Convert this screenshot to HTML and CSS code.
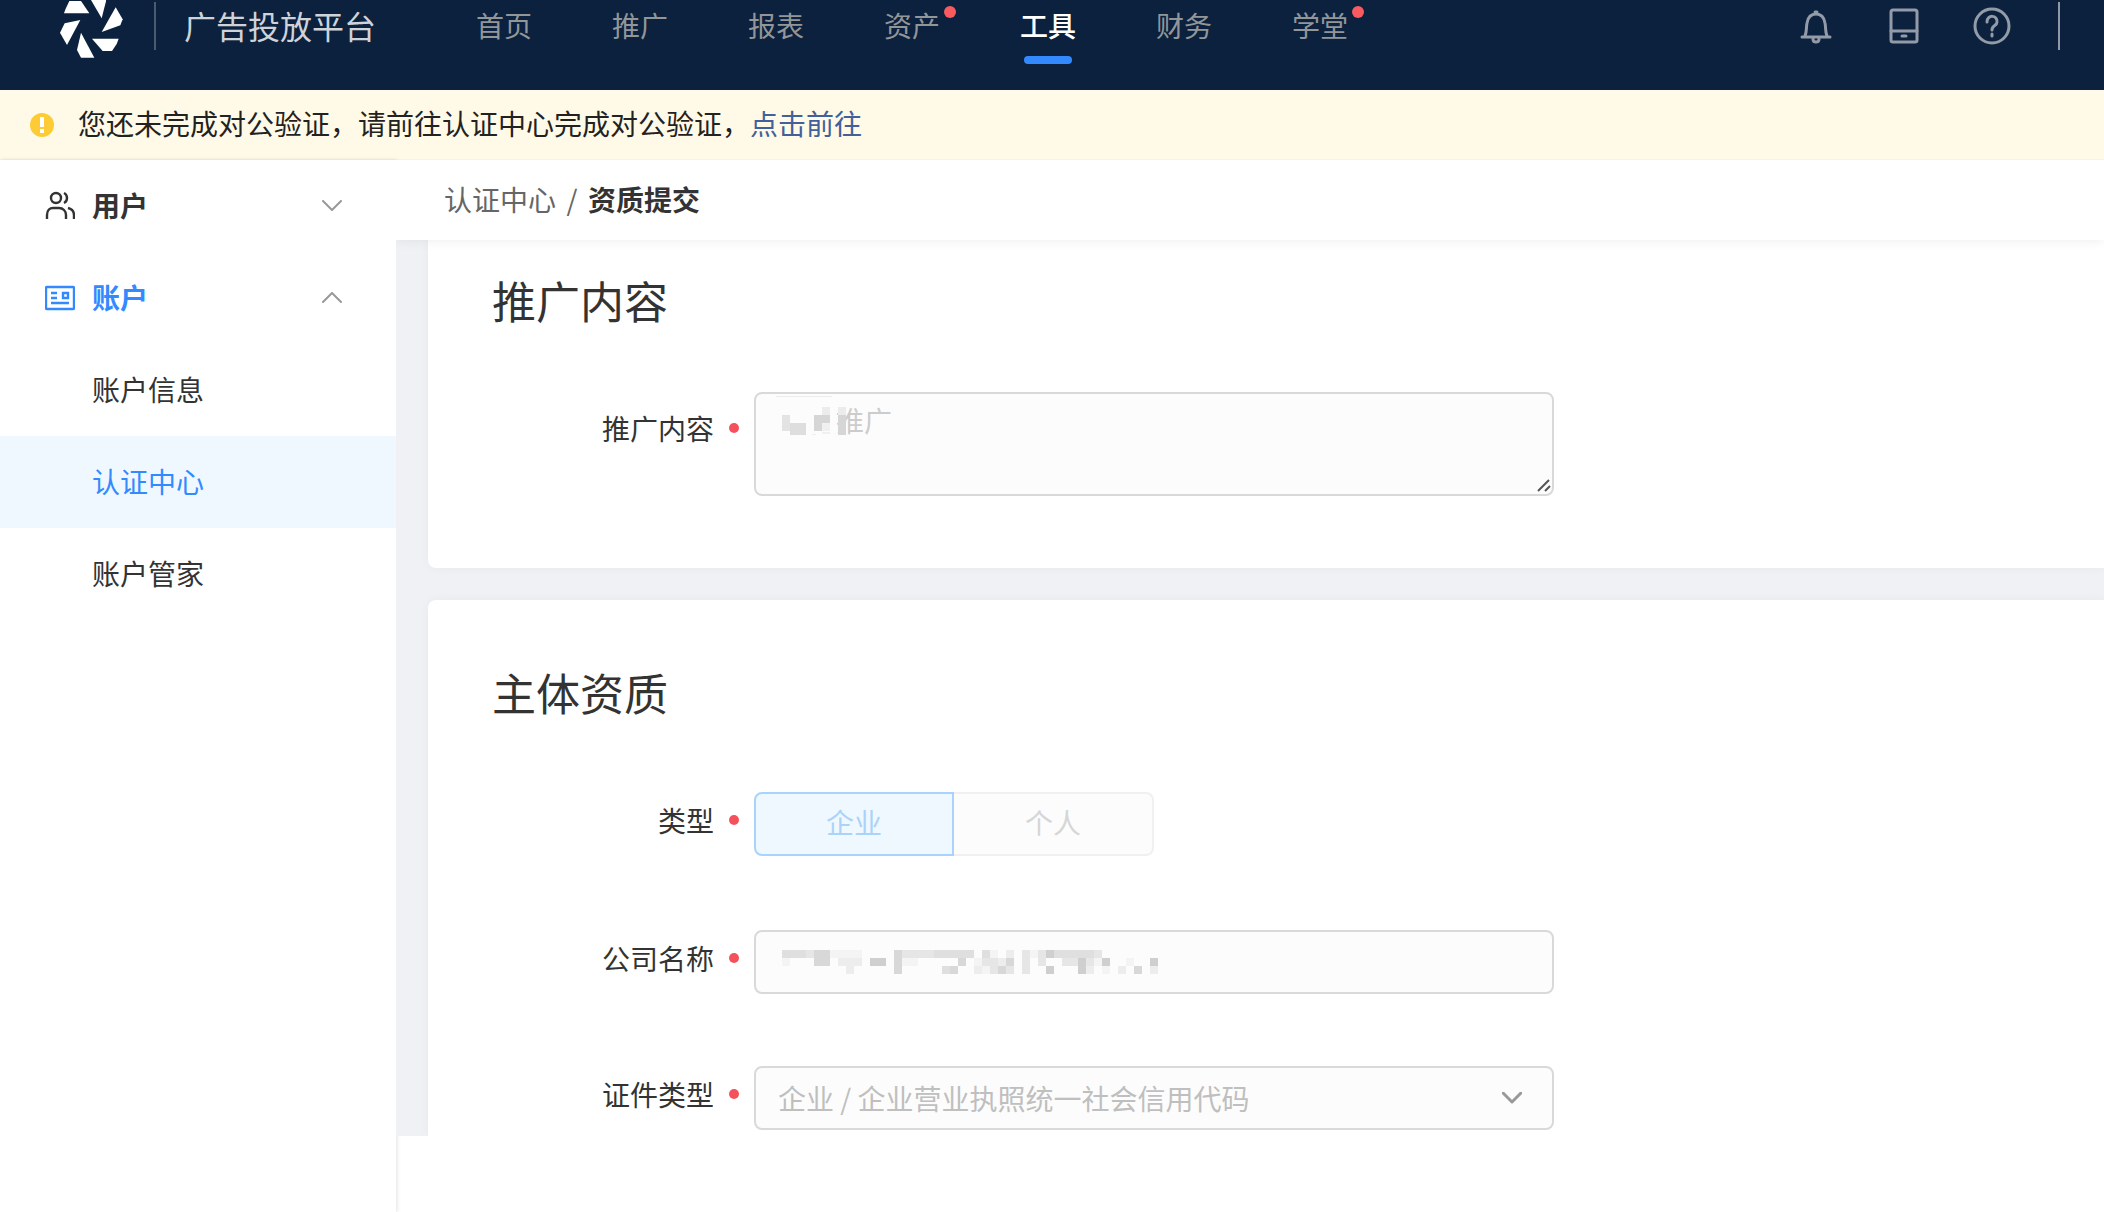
FILE: index.html
```html
<!DOCTYPE html>
<html lang="zh-CN">
<head>
  <meta charset="UTF-8">
  <meta name="viewport" content="width=device-width, initial-scale=1.0">
  <title>广告投放平台</title>
  <link rel="stylesheet" href="styles.css">
</head>
<body>
  <header class="header">
    <div class="header-row">
      <svg class="logo" viewBox="177 -18 201 192" fill="#fff">
        <path d="M192 40L197 26L208 3H243L268 40Z"/>
        <path d="M266 -12H318V4L305 55Z"/>
        <path d="M347 22L368 58L361 76L305 96Z"/>
        <path d="M276 116H356L350 132L336 153H308Z"/>
        <path d="M243 98L283 173H243L231 150Z"/>
        <path d="M241 60L201 135L180 98L194 70Z"/>
      </svg>
      <span class="divider"></span>
      <span class="brand">广告投放平台</span>
      <nav class="nav">
        <a href="#">首页</a>
        <a href="#">推广</a>
        <a href="#">报表</a>
        <a href="#" class="has-dot">资产</a>
        <a href="#" class="active">工具</a>
        <a href="#">财务</a>
        <a href="#" class="has-dot">学堂</a>
      </nav>
      <div class="tools">
        <button type="button" aria-label="通知">
          <svg viewBox="0 0 40 40">
            <path d="M6 31H34M9 30C11 26 10 21 11 17C12 11 15 8 20 8C25 8 28 11 29 17C30 21 29 26 31 30M17 33C17 37 23 37 23 33M19 6H21"/>
          </svg>
        </button>
        <button type="button" aria-label="设备">
          <svg viewBox="0 0 40 40">
            <rect x="7" y="4" width="26" height="32" rx="2"/>
            <path d="M7 25H33M18 30H22"/>
          </svg>
        </button>
        <button type="button" aria-label="帮助">
          <svg viewBox="0 0 40 40">
            <circle cx="20" cy="20" r="17"/>
            <path d="M15 16C15 8 26 9 25 16C25 20 20 19 20 24M20 28V30"/>
          </svg>
        </button>
      </div>
      <span class="divider light"></span>
    </div>
  </header>

  <div class="alert">
    <svg class="alert-icon" viewBox="0 0 24 24">
      <circle cx="12" cy="12" r="12" fill="#fdcb35"/>
      <path d="M12 4V14M12 16V20" stroke="#fff" stroke-width="4"/>
    </svg>
    <p>您还未完成对公验证，请前往认证中心完成对公验证，<a href="#">点击前往</a></p>
  </div>

  <div class="layout">
    <aside class="sidebar">
      <button type="button" class="menu-title">
        <svg class="menu-icon" viewBox="0 0 30 30">
          <circle cx="11" cy="7" r="5"/>
          <path d="M2 28V24C2 19 5 17 8 17H14C18 17 21 20 21 24V28M19 2C23 4 23 10 19 12M23 17C27 18 29 21 29 24V28"/>
        </svg>
        <span>用户</span>
        <svg class="arrow" viewBox="0 0 20 12"><path d="M1 1L10 10L19 1"/></svg>
      </button>
      <button type="button" class="menu-title active">
        <svg class="menu-icon" viewBox="0 0 30 30">
          <rect x="1" y="4" width="28" height="22" rx="1"/>
          <path d="M6 10H12M6 15H12M6 20H24M18 10H23V15H18Z"/>
        </svg>
        <span>账户</span>
        <svg class="arrow" viewBox="0 0 20 12"><path d="M1 10L10 1L19 10"/></svg>
      </button>
      <a href="#" class="menu-item">账户信息</a>
      <a href="#" class="menu-item active">认证中心</a>
      <a href="#" class="menu-item">账户管家</a>
    </aside>

    <main class="main">
      <div class="breadcrumb">
        <a href="#">认证中心</a>
        <span class="slash">/</span>
        <strong>资质提交</strong>
      </div>

      <div class="content">
        <section class="card card-top">
          <h2>推广内容</h2>
          <div class="form-row">
            <label for="promo">推广内容</label>
            <div class="field field-area">
              <textarea id="promo" disabled>推广</textarea>
              <svg class="mosaic mosaic-area" viewBox="0 0 72 40" shape-rendering="crispEdges">
                <path fill="#ececec" d="M0 0h56v1h-56zM46 11h8v8h-8zM62 11h8v8h-8z"/>
                <path fill="#e3e3e3" d="M6 19h8v16h-8zM14 35h8v4h-8z"/>
                <path fill="#dedede" d="M14 27h16v12h-16z"/>
                <path fill="#d6d6d6" d="M38 19h16v8h-16zM38 27h8v8h-8zM62 19h8v20h-8z"/>
                <path fill="#f0f0f0" d="M46 27h8v8h-8zM46 36h8v2h-8zM36 38h4v1h-4z"/>
              </svg>
              <svg class="grip" viewBox="0 0 14 14"><path d="M1 13L12 2M8 13L13 8"/></svg>
            </div>
          </div>
        </section>

        <section class="card">
          <h2>主体资质</h2>
          <div class="form-row">
            <span class="label" id="type-label">类型</span>
            <div class="radio-group" role="radiogroup" aria-labelledby="type-label">
              <label><input type="radio" name="type" checked disabled><span>企业</span></label>
              <label><input type="radio" name="type" disabled><span>个人</span></label>
            </div>
          </div>
          <div class="form-row">
            <label for="company">公司名称</label>
            <div class="field">
              <input type="text" id="company" disabled>
              <!-- masked company name, 8px cells -->
              <svg class="mosaic" viewBox="0 0 376 24" shape-rendering="crispEdges">
                <path fill="#cfcfcf" d="M88 8h16v8h-16zM264 0h8v8h-8zM264 16h8v8h-8zM320 8h8v8h-8zM368 8h8v8h-8zM296 8h8v16h-8z"/>
                <path fill="#d8d8d8" d="M32 0h16v16h-16zM112 0h8v24h-8zM176 8h8v8h-8zM216 16h8v8h-8zM224 8h8v8h-8zM168 16h8v8h-8zM352 16h8v8h-8z"/>
                <path fill="#dfdfdf" d="M0 0h24v8h-24zM152 0h40v8h-40zM200 0h8v8h-8zM272 0h40v8h-40zM160 16h8v8h-8z"/>
                <path fill="#e6e6e6" d="M24 0h8v8h-8zM120 0h32v8h-32zM200 8h16v8h-16zM208 16h8v8h-8zM224 16h8v8h-8zM240 0h8v24h-8zM280 8h16v8h-16zM304 8h8v8h-8zM312 0h8v8h-8zM256 0h8v16h-8z"/>
                <path fill="#ededed" d="M56 8h24v8h-24zM64 16h8v8h-8zM192 16h8v8h-8zM216 8h8v8h-8zM224 0h8v8h-8zM304 16h8v8h-8zM336 16h8v8h-8zM368 16h8v8h-8z"/>
                <path fill="#f4f4f4" d="M0 8h8v8h-8zM48 0h32v8h-32zM120 8h16v8h-16zM192 8h8v8h-8zM200 16h8v8h-8zM208 0h8v8h-8zM248 0h8v8h-8zM312 8h8v8h-8zM320 16h8v8h-8zM344 8h8v8h-8z"/>
              </svg>
            </div>
          </div>
          <div class="form-row">
            <label for="cert">证件类型</label>
            <div class="field">
              <select id="cert" disabled>
                <option>企业 / 企业营业执照统一社会信用代码</option>
              </select>
              <svg class="arrow select-arrow" viewBox="0 0 20 12"><path d="M1 1L10 10L19 1"/></svg>
            </div>
          </div>
        </section>
      </div>
    </main>
  </div>
</body>
</html>
```
FILE: styles.css
```css
* {
  margin: 0;
  padding: 0;
  box-sizing: border-box;
}

body {
  min-height: 100vh;
  display: flex;
  flex-direction: column;
  background-color: #fff;
  color: #333;
  font-family: 'Noto Sans CJK SC', sans-serif;
  font-size: 28px;
  line-height: 40px;
}

a {
  color: inherit;
  text-decoration: none;
}

button, input, select, textarea {
  font: inherit;
  color: inherit;
  border: none;
  background: none;
}

svg {
  display: block;
  flex-shrink: 0;
}

/* header */
.header {
  height: 90px;
  background-color: #0c213d;
}

.header-row {
  height: 52px;
  display: flex;
  align-items: center;
  padding: 0 44px 0 59px;
}

.logo {
  width: 67px;
  height: 64px;
}

.divider {
  width: 2px;
  height: 48px;
  margin: 0 28px;
  background-color: #4a5a71;
}

.divider.light {
  margin: 0 0 0 46px;
  background-color: #8f98a4;
}

.brand {
  width: 292px;
  padding-bottom: 2px;
  font-size: 32px;
  color: #ced3da;
}

.nav {
  display: flex;
  gap: 80px;
  padding-bottom: 2px;
}

.nav a {
  position: relative;
  color: #939699;
}

.nav a.active {
  color: #fff;
  font-weight: 500;
}

.nav a.active::after {
  content: '';
  position: absolute;
  left: 4px;
  bottom: -19px;
  width: 48px;
  height: 8px;
  border-radius: 4px;
  background-color: #338aff;
}

.nav a.has-dot::after {
  content: '';
  position: absolute;
  top: 1px;
  right: -16px;
  width: 12px;
  height: 12px;
  border-radius: 50%;
  background-color: #f75b60;
}

.tools {
  margin-left: auto;
  display: flex;
  gap: 48px;
}

.tools svg {
  width: 40px;
  height: 40px;
  fill: none;
  stroke: #929ba7;
  stroke-width: 3;
  stroke-linecap: round;
  stroke-linejoin: round;
}

/* alert */
.alert {
  height: 70px;
  display: flex;
  align-items: center;
  gap: 24px;
  padding: 0 30px;
  background-color: #fff9e8;
  border-bottom: 1px solid #fdf3dc;
  color: #222;
}

.alert-icon {
  width: 24px;
  height: 24px;
}

.alert p {
  padding-bottom: 3px;
}

.alert a {
  color: #426099;
}

/* sidebar */
.layout {
  flex: 1;
  display: flex;
}

.sidebar {
  width: 396px;
  flex-shrink: 0;
  box-shadow: 1px 0 4px rgba(0, 0, 0, 0.12);
}

.menu-title, .menu-item {
  width: 100%;
  height: 92px;
  display: flex;
  align-items: center;
}

.menu-title {
  gap: 17px;
  padding: 0 54px 0 45px;
  font-weight: 700;
}

.menu-title span {
  padding-bottom: 3px;
}

.menu-item {
  padding: 0 0 3px 92px;
}

.menu-title.active, .menu-item.active {
  color: #338aff;
}

.menu-item.active {
  background-color: #f0f8ff;
}

.menu-icon {
  width: 30px;
  height: 30px;
  fill: none;
  stroke: currentColor;
  stroke-width: 2.4;
}

.arrow {
  width: 20px;
  height: 12px;
  margin-left: auto;
  fill: none;
  stroke: #999;
  stroke-width: 2;
  stroke-linecap: round;
  stroke-linejoin: round;
}

/* main */
.main {
  flex: 1;
  min-width: 0;
}

.breadcrumb {
  position: relative;
  height: 80px;
  display: flex;
  align-items: center;
  padding: 0 48px 3px;
  background-color: #fff;
  box-shadow: 0 2px 10px rgba(0, 0, 0, 0.06);
  clip-path: inset(0 0 -12px 0);
}

.breadcrumb a, .slash {
  color: #666;
}

.slash {
  width: 32px;
  text-align: center;
}

.content {
  display: flex;
  flex-direction: column;
  gap: 32px;
  padding-left: 32px;
  background-color: #eff1f5;
  overflow: hidden;
}

.card {
  padding: 64px 64px 6px;
  background-color: #fff;
  border-radius: 8px 0 0 0;
  box-shadow: 0 0 12px rgba(0, 0, 0, 0.04);
}

.card-top {
  padding: 32px 64px 72px;
  border-radius: 0 0 0 8px;
}

.card h2 {
  margin-bottom: 72px;
  font-size: 44px;
  font-weight: 400;
  line-height: 56px;
}

.form-row {
  display: flex;
  align-items: flex-start;
}

.form-row + .form-row {
  margin-top: 72px;
}

.form-row > label, .form-row > .label {
  width: 262px;
  display: flex;
  align-items: center;
  justify-content: flex-end;
  gap: 15px;
  padding-right: 15px;
  line-height: 56px;
}

.form-row > label::after, .form-row > .label::after {
  content: '';
  width: 10px;
  height: 10px;
  border-radius: 50%;
  background-color: #f5515c;
}

.field {
  position: relative;
  width: 100%;
  max-width: 800px;
}

.field-area {
  margin-top: -8px;
}

.field input, .field select, .field textarea {
  display: block;
  width: 100%;
  height: 64px;
  padding: 0 22px;
  border: 2px solid #d9d9d9;
  border-radius: 8px;
  background-color: #fcfcfc;
  color: #bfbfbf;
  opacity: 1;
}

.field select {
  appearance: none;
}

.field textarea {
  height: 104px;
  padding: 6px 22px;
  resize: none;
  text-indent: 58px;
  color: #ccc;
}

.mosaic {
  position: absolute;
  top: 20px;
  left: 28px;
  width: 376px;
  height: 24px;
}

.mosaic-area {
  top: 4px;
  left: 22px;
  width: 72px;
  height: 40px;
}

.grip {
  position: absolute;
  right: 3px;
  bottom: 4px;
  width: 14px;
  height: 14px;
  fill: none;
  stroke: #555;
  stroke-width: 2;
}

.select-arrow {
  position: absolute;
  top: 26px;
  right: 32px;
  stroke-width: 3;
}

.radio-group {
  display: flex;
  padding-bottom: 2px;
}

.radio-group label {
  position: relative;
}

.radio-group input {
  position: absolute;
  opacity: 0;
}

.radio-group span {
  display: block;
  width: 200px;
  height: 64px;
  border: 2px solid #f0f0f0;
  border-left: none;
  border-radius: 0 8px 8px 0;
  background-color: #fcfcfc;
  color: #d6d6d6;
  line-height: 56px;
  text-align: center;
}

.radio-group input:checked + span {
  border: 2px solid #a9d3fb;
  border-radius: 8px 0 0 8px;
  background-color: #f0f8ff;
  color: #abd3fa;
}
```
